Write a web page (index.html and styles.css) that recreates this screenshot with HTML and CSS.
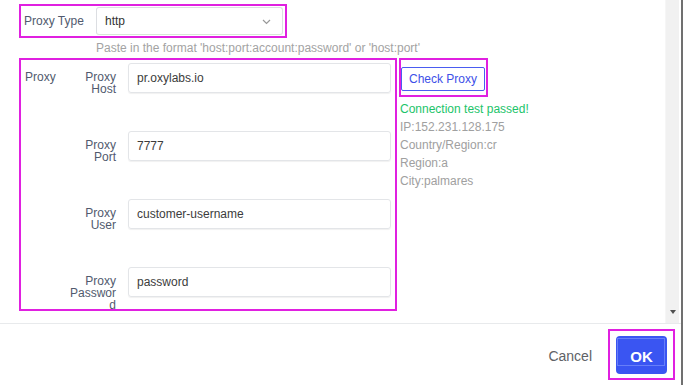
FILE: index.html
```html
<!DOCTYPE html>
<html>
<head>
<meta charset="utf-8">
<link rel="stylesheet" href="styles.css">
</head>
<body>
<div class="dialog">
  <div class="body">
    <div class="content">
      <div class="type-row mark">
        <span class="type-label">Proxy Type</span>
        <div class="select">
          <span>http</span>
          <svg class="chev" width="9" height="6" viewBox="0 0 9 6"><path d="M1 1 L4.5 4.5 L8 1" fill="none" stroke="#999" stroke-width="1.2"/></svg>
        </div>
      </div>
      <div class="hint">Paste in the format 'host:port:account:password' or 'host:port'</div>
      <div class="proxy-row">
        <div class="proxy-box mark">
          <div class="proxy-label">Proxy</div>
          <div class="fields">
            <div class="field"><div class="flabel">Proxy Host</div><div class="input">pr.oxylabs.io</div></div>
            <div class="field"><div class="flabel">Proxy Port</div><div class="input">7777</div></div>
            <div class="field"><div class="flabel">Proxy User</div><div class="input">customer-username</div></div>
            <div class="field"><div class="flabel">Proxy Password</div><div class="input">password</div></div>
          </div>
        </div>
        <div class="check-col">
          <div class="check-box mark"><button class="check-btn">Check Proxy</button></div>
          <div class="status">
            <div class="ok-text">Connection test passed!</div>
            <div>IP:152.231.128.175</div>
            <div>Country/Region:cr</div>
            <div>Region:a</div>
            <div>City:palmares</div>
          </div>
        </div>
      </div>
    </div>
    <div class="scrollbar"><span class="arrow"></span></div>
  </div>
  <div class="footer">
    <span class="cancel">Cancel</span>
    <div class="ok-box mark"><button class="ok-btn">OK</button></div>
  </div>
</div>
</body>
</html>
```
FILE: styles.css
```css
* { box-sizing: border-box; }
html, body { margin: 0; padding: 0; background: #fff; }
body {
  width: 685px;
  height: 385px;
  overflow: hidden;
  font-family: "Liberation Sans", Arial, sans-serif;
  font-size: 12px;
  color: #515a6e;
}
.dialog {
  width: 683px;
  height: 385px;
  border-right: 2px solid #707070;
  display: flex;
  flex-direction: column;
}
.body {
  height: 324px;
  flex: none;
  display: flex;
  overflow: hidden;
  border-bottom: 1px solid #e8eaec;
}
.content {
  flex: 1;
  padding: 4px 0 0 19px;
}
.mark { border: 2px solid #e020e0; }
.type-row {
  width: 268px;
  height: 34px;
  display: flex;
  align-items: flex-start;
  padding: 1px 2px 0 0;
}
.type-label {
  width: 75px;
  padding-left: 3px;
  line-height: 28px;
  color: #515a6e;
}
.select {
  flex: 1;
  height: 28px;
  border: 1px solid #dcdee2;
  border-bottom-color: #d6e8d6;
  border-radius: 3px;
  display: flex;
  align-items: center;
  justify-content: space-between;
  padding: 0 11px 0 8px;
  color: #333;
}
.chev { margin-top: 1px; }
.hint {
  margin: 2px 0 0 77px;
  line-height: 16px;
  color: #a3a3a3;
}
.proxy-row {
  display: flex;
  align-items: flex-start;
  margin-top: 2px;
}
.proxy-box {
  width: 378px;
  height: 253px;
  display: flex;
  padding: 3px 4px 0 2px;
}
.proxy-label {
  width: 45px;
  padding: 8px 0 0 2px;
  line-height: 12px;
}
.fields {
  flex: 1;
  display: flex;
  flex-direction: column;
  gap: 38px;
}
.field {
  display: flex;
  align-items: flex-start;
  height: 30px;
}
.flabel {
  width: 48px;
  margin-right: 12px;
  text-align: right;
  line-height: 12px;
  padding-top: 8px;
  overflow-wrap: break-word;
}
.input {
  flex: 1;
  height: 30px;
  border: 1px solid #e3e5e8;
  border-radius: 3px;
  box-shadow: 0 1px 1px rgba(0,0,0,0.06);
  padding: 0 8px;
  line-height: 28px;
  color: #3c3c3c;
}
.check-col {
  margin-left: 2px;
}
.check-box {
  width: 89px;
  height: 39px;
  padding: 7px 1px 4px 0;
}
.check-btn {
  width: 84px;
  height: 24px;
  border: 1px solid #4a5cf0;
  border-radius: 2px;
  background: #fff;
  color: #3d50e8;
  font-family: "Liberation Sans", Arial, sans-serif;
  font-size: 12px;
  padding: 0;
}
.status {
  margin: 3px 0 0 1px;
  line-height: 18px;
  color: #a0a0a0;
}
.ok-text { color: #1cc46a; }
.scrollbar {
  width: 14px;
  margin-right: 2px;
  background: #f1f1f1;
  border-left: 1px solid #f6f6f6;
  display: flex;
  flex-direction: column;
  justify-content: flex-end;
  align-items: center;
  padding-bottom: 9px;
}
.arrow {
  width: 0;
  height: 0;
  border-left: 3.5px solid transparent;
  border-right: 3.5px solid transparent;
  border-top: 4px solid #505050;
}
.footer {
  flex: 1;
  display: flex;
  align-items: flex-start;
  justify-content: flex-end;
  padding: 5px 6px 0 0;
}
.cancel {
  font-size: 14px;
  color: #606266;
  margin-top: 19px;
  margin-right: 16px;
}
.ok-box {
  width: 67px;
  height: 51px;
  padding: 5px 6px 0 6px;
}
.ok-btn {
  position: relative;
  width: 51px;
  height: 38px;
  border: none;
  border-radius: 4px;
  background: #3a55f2;
  color: #fff;
  font-family: "Liberation Sans", Arial, sans-serif;
  font-size: 15px;
  font-weight: bold;
  padding: 2px 0 0 0;
}
.ok-btn::before {
  content: "";
  position: absolute;
  left: 1px;
  top: 2px;
  width: 46px;
  height: 26px;
  border: 1px solid rgba(140,160,255,0.55);
}
```
